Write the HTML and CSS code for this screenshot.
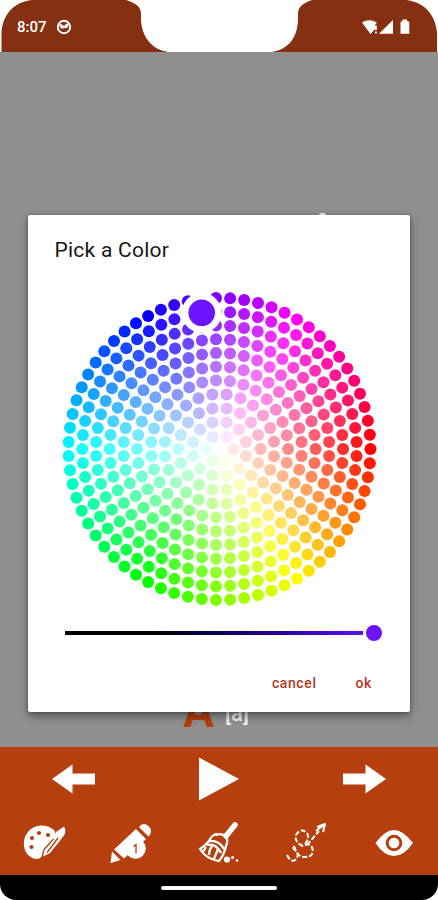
FILE: index.html
```html
<!DOCTYPE html>
<html lang="en">
<head>
<meta charset="utf-8">
<title>Pick a Color</title>
<link rel="stylesheet" href="styles.css">
</head>
<body>
<div class="phone">
  <header class="status">
    <svg class="notch" viewBox="0 0 438 52" width="438" height="52" aria-hidden="true">
      <path d="M0 0H32C14 2 3 14 1.500 32V52H0ZM438 0H406C424 2 435 14 437 32V52H438ZM126 0C136 3 141 7 141 14V20C142 37 151 49 168 52H272C289 49 297 38 298 20V14C298 7 303 3 312 0Z" fill="#fff"/>
    </svg>
    <span class="time">8:07</span>
    <svg class="face" viewBox="0 0 16 16" width="16" height="16"><circle cx="8" cy="8" r="6.200" fill="none" stroke="#fff" stroke-width="1.900"/><path d="M3 5L6 5.500L8 7L10 5L13 4L12 8L9.500 9.500L8 8.500L6.500 10L4 8.500Z" fill="#fff"/></svg>
    <svg class="signals" viewBox="0 0 50 18" width="50" height="18" fill="#fff"><path d="M1 4.500Q8 0 16 4.500L14 7V11L9.500 16Z"/><path d="M14 7.500H15.800V12H14ZM14 13.500H15.800V15.500H14ZM18 15.800L32 2V15.800ZM39.500 4.500Q39.500 3 41.500 3V1.500H46V3Q48.300 3 48.300 4.500V15.800H39.500Z"/></svg>
  </header>
  <main class="stage">
    <div class="letters"><span class="letter">A</span><span class="sound">[a]</span></div>
    <div class="peek"></div>
    <section class="dialog">
      <h1>Pick a Color</h1>
      <svg class="wheel" id="wheel" viewBox="-164.500 -164 328 328" width="328" height="328"></svg>
      <div class="slider"><div class="track"></div><div class="thumb"></div></div>
      <div class="actions"><span>cancel</span><span>ok</span></div>
    </section>
  </main>
  <nav class="controls">
    <div class="row three">
      <svg viewBox="0 0 44 44" width="44" height="44"><path d="M1 22L21.500 7.500V16.500H44.500V27.500H21.500V36.500Z"/></svg>
      <svg viewBox="0 0 44 44" width="44" height="44"><path d="M2 .500L42 22L2 43.500Z"/></svg>
      <svg viewBox="0 0 44 44" width="44" height="44"><path d="M43 22L22.500 7.500V16.500H0V27.500H22.500V36.500Z"/></svg>
    </div>
    <div class="row five">
      <svg viewBox="0 0 44 44" width="44" height="44"><path d="M33 10C26 3 15 3 9 8C-1 16 0 31 9 36C14 39.500 19 38 20 34L33 18Z"/><path d="M42 5.500Q44.500 9 42.300 14L37 21L28 32L21 35.500L22 28L31 16L34 11Z"/><g class="holes"><circle cx="17" cy="12" r="2.100"/><circle cx="26" cy="14" r="2.100"/><circle cx="10" cy="17" r="2.100"/><circle cx="9.500" cy="26" r="2.100"/></g><path class="cut" d="M36 17L25 31.500M31.500 18L22 28.500L20.500 34"/></svg>
      <svg viewBox="0 0 44 44" width="44" height="44"><path d="M1.500 42L3 30.500L11.500 39ZM5 28.500L27 8L37 18L15 37.500ZM30 6Q34 .500 39.500 5Q44.500 10 39.500 15.500Z"/><circle cx="26.500" cy="27.500" r="10.300"/><path class="cut" d="M24.500 25.500L27 23.500V32.500"/></svg>
      <svg viewBox="0 0 44 44" width="44" height="44"><path class="thick" d="M38 4L29 15"/><path class="line" d="M19 14Q24 12 28 15Q32 19 29 25Q27 34 22 40Q9 38 3 28Q8 25 12 20Q15 14 19 13ZM12 20Q22 19 27 28M10 24Q19 22 24 32M9 26L6 31M15 25Q12 29 12 34M21 28L17 38"/><circle cx="30" cy="38.500" r="3.100"/><circle cx="35.500" cy="36.500" r="1.500"/><circle cx="40" cy="39.500" r="1.300"/></svg>
      <svg viewBox="0 0 44 44" width="44" height="44"><path class="dash" d="M2 34Q6 42 10 39Q15 35 11 30Q7 27 8 24M9 25Q13 37 20 36Q29 36 27.500 28Q26 21 18 25Q9 21 11 14Q16 6 22 12Q25 17 20 23M22 24L34 10"/><path class="line thin" d="M32 6L40 3L38 11M31 10L40 3"/></svg>
      <svg viewBox="0 0 44 44" width="44" height="44"><path d="M3.500 22Q13 9 22 9T41 22Q32 35 22 35T3.500 22Z"/><circle class="iris" cx="22" cy="22" r="6.800"/></svg>
    </div>
  </nav>
  <footer class="home"><div></div></footer>
</div>
<script src="wheel.js"></script>
</body>
</html>
```
FILE: styles.css
```css
* { box-sizing: border-box; }
body { margin: 0; background: #fff; font-family: Roboto, sans-serif; }
.phone { width: 438px; height: 900px; display: flex; flex-direction: column; overflow: hidden; }
.status { position: relative; height: 52px; background: #853010; display: flex; align-items: center; padding: 2px 27px 0 17px; color: #fff; }
.notch { position: absolute; left: 0; top: 0; }
.time { font-size: 15px; font-weight: 500; width: 31px; }
.face { margin-left: 8px; }
.signals { margin-left: auto; }
.stage { position: relative; flex: 1; background: #8f8f8f; display: flex; justify-content: center; align-items: flex-end; overflow: hidden; }
.letters { display: flex; align-items: baseline; gap: 11px; margin: 0 6px 3px 0; line-height: 48px; }
.letter { font-size: 46px; font-weight: 700; color: #b53f0e; }
.sound { font-size: 22px; font-weight: 500; color: #f2f2f2; transform: translateY(-6px); }
.peek { position: absolute; left: 318px; top: 161px; width: 9px; height: 9px; border-radius: 50%; background: #fff; }
.dialog { position: absolute; left: 28px; top: 163px; width: 382px; height: 497px; background: #fff; border-radius: 2px; box-shadow: 0 4px 9px rgba(0,0,0,.42), 0 0 3px rgba(0,0,0,.3); display: flex; flex-direction: column; }
h1 { margin: 22px 0 0 26.5px; font-size: 21px; line-height: 26px; font-weight: 400; letter-spacing: .25px; color: #161616; }
.wheel { margin: 22px 0 0 27px; flex: none; }
.slider { display: flex; align-items: center; gap: 3px; margin: 12px 0 0 37px; height: 16px; }
.track { width: 298px; height: 4px; background: linear-gradient(90deg, #000 0%, #000 30%, #080052 50%, #2f00a8 75%, #5c10f5 100%); }
.thumb { width: 16px; height: 16px; border-radius: 50%; background: #6d14ff; }
.actions { display: flex; justify-content: flex-end; gap: 39px; margin: 33px 38px 0 0; font-size: 14px; line-height: 18px; font-weight: 500; letter-spacing: .6px; color: #b53a1c; }
.controls { height: 128px; background: #b53f0e; }
.row { height: 64px; display: grid; align-items: center; justify-items: center; fill: #fff; }
.three { grid-template-columns: repeat(3, 1fr); }
.five { grid-template-columns: repeat(5, 1fr); }
.holes { fill: #b53f0e; }
.cut { fill: none; stroke: #b53f0e; stroke-width: 1.3; }
.line { fill: none; stroke: #fff; stroke-width: 2.3; stroke-linejoin: round; }
.thin { stroke-width: 2; }
.thick { fill: none; stroke: #fff; stroke-width: 5.5; stroke-linecap: round; }
.dash { fill: none; stroke: #fff; stroke-width: 2; stroke-dasharray: 5 2; }
.iris { fill: #fff; stroke: #b53f0e; stroke-width: 3; }
.home { height: 25px; background: #000; border-radius: 0 0 16px 16px; display: flex; justify-content: center; align-items: center; }
.home div { width: 116px; height: 4px; border-radius: 2px; background: #fff; }
```
FILE: wheel.js
```js
const wheel = document.getElementById('wheel');
const rings = 12;
const outer = 151;
const cell = outer / (rings - 1) / 2;

function circle(x, y, r, fill) {
  const dot = document.createElementNS('http://www.w3.org/2000/svg', 'circle');
  dot.setAttribute('cx', x);
  dot.setAttribute('cy', y);
  dot.setAttribute('r', r);
  dot.setAttribute('fill', fill);
  wheel.appendChild(dot);
}

function hsv(h, s) {
  const channel = n => {
    const k = (n + h / 60) % 6;
    return Math.round(255 * (1 - s * Math.max(0, Math.min(k, 4 - k, 1))));
  };
  return `rgb(${channel(5)},${channel(3)},${channel(1)})`;
}

for (let i = 0; i < rings; i++) {
  const radius = outer * i / (rings - 1);
  const total = i ? Math.max(1, Math.floor(0.975 * Math.PI / Math.asin(cell / radius) + 0.5)) : 1;
  for (let j = 0; j < total; j++) {
    const angle = 2 * Math.PI * j / total + Math.PI / total * ((i + 1) % 2);
    circle(radius * Math.cos(angle), radius * Math.sin(angle), 6, hsv(angle * 180 / Math.PI, i / (rings - 1)));
  }
}

// Selected colour marker
circle(-17.8, -136.2, 20, '#fff');
circle(-17.8, -136.2, 13.3, '#6d14ff');
```
